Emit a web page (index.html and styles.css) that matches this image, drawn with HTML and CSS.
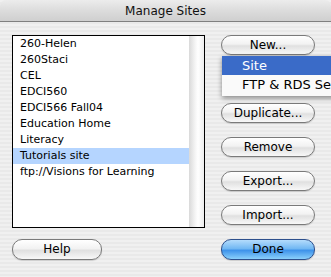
FILE: index.html
```html
<!DOCTYPE html>
<html>
<head>
<meta charset="utf-8">
<link rel="stylesheet" href="styles.css">
</head>
<body>
<div class="window">
  <div class="titlebar">Manage Sites</div>
  <div class="content">
    <div class="main">
      <div class="listbox">
        <ul class="items">
          <li>260-Helen</li>
          <li>260Staci</li>
          <li>CEL</li>
          <li>EDCI560</li>
          <li>EDCI566 Fall04</li>
          <li>Education Home</li>
          <li>Literacy</li>
          <li class="selected">Tutorials site</li>
          <li>ftp://Visions for Learning</li>
        </ul>
        <div class="scrolltrack"></div>
      </div>
      <div class="buttons">
        <div class="btn">New...</div>
        <div class="btn hidden">Edit...</div>
        <div class="btn">Duplicate...</div>
        <div class="btn">Remove</div>
        <div class="btn">Export...</div>
        <div class="btn">Import...</div>
      </div>
    </div>
    <div class="footer">
      <div class="btn wide">Help</div>
      <div class="btn default">Done</div>
    </div>
  </div>
  <div class="menu">
    <div class="menu-item active">Site</div>
    <div class="menu-item">FTP &amp; RDS Se</div>
  </div>
</div>
</body>
</html>
```

FILE: styles.css
```css
html, body {
  margin: 0;
  padding: 0;
  width: 331px;
  height: 277px;
  overflow: hidden;
  background: #ececec;
}
.window {
  position: relative;
  width: 331px;
  height: 277px;
  font-family: "DejaVu Sans", sans-serif;
  color: #000;
  background: repeating-linear-gradient(to bottom, #f0f0f0 0, #f0f0f0 2px, #e9e9e9 2px, #e9e9e9 4px);
  overflow: hidden;
}
.titlebar {
  height: 21px;
  border-bottom: 1px solid #7f7f7f;
  border-radius: 6px 6px 0 0;
  background: linear-gradient(to bottom, #ececec 0%, #dcdcdc 50%, #cfcfcf 100%);
  text-align: center;
  font-size: 12px;
  line-height: 22px;
  color: #111;
}
.content {
  padding: 13px 16px 0 12px;
}
.main {
  display: flex;
  gap: 16px;
  height: 193px;
}
.listbox {
  width: 191px;
  height: 191px;
  border: 1px solid #000;
  background: #fff;
  display: flex;
}
.items {
  list-style: none;
  margin: 0;
  padding: 0;
  flex: 1;
  font-size: 11px;
}
.items li {
  height: 16px;
  line-height: 16px;
  padding-left: 7px;
  white-space: nowrap;
}
.items li.selected {
  background: #b5d5ff;
}
.scrolltrack {
  width: 15px;
  background: linear-gradient(to right, #d9d9d9 0%, #f4f4f4 40%, #ffffff 60%, #eeeeee 100%);
}
.buttons {
  display: flex;
  flex-direction: column;
  gap: 14px;
  width: 94px;
}
.btn {
  height: 18px;
  border: 1px solid #7a7a7a;
  border-radius: 10px;
  background: linear-gradient(to bottom, #ffffff 0%, #f2f2f2 45%, #e0e0e0 55%, #f8f8f8 100%);
  text-align: center;
  font-size: 12px;
  line-height: 18px;
  box-shadow: 0 1px 1px rgba(0,0,0,0.15);
}
.btn.hidden {
  visibility: hidden;
}
.footer {
  display: flex;
  justify-content: space-between;
  margin-top: 11px;
}
.footer .btn {
  height: 19px;
  line-height: 19px;
}
.btn.wide {
  width: 88px;
}
.btn.default {
  width: 92px;
  border-color: #2d4f8c;
  background: linear-gradient(to bottom, #b4dcfc 0%, #72b8f3 45%, #3f93ea 55%, #8ad0fb 100%);
}
.menu {
  position: absolute;
  left: 222px;
  top: 56px;
  width: 130px;
  padding: 0 0 2px;
  background: rgba(250,250,250,0.97);
  box-shadow: 0 2px 5px rgba(0,0,0,0.45);
}
.menu-item {
  height: 19px;
  line-height: 19px;
  padding-left: 20px;
  font-size: 13px;
  white-space: nowrap;
}
.menu-item.active {
  background: #3a6bc8;
  color: #fff;
}
```
